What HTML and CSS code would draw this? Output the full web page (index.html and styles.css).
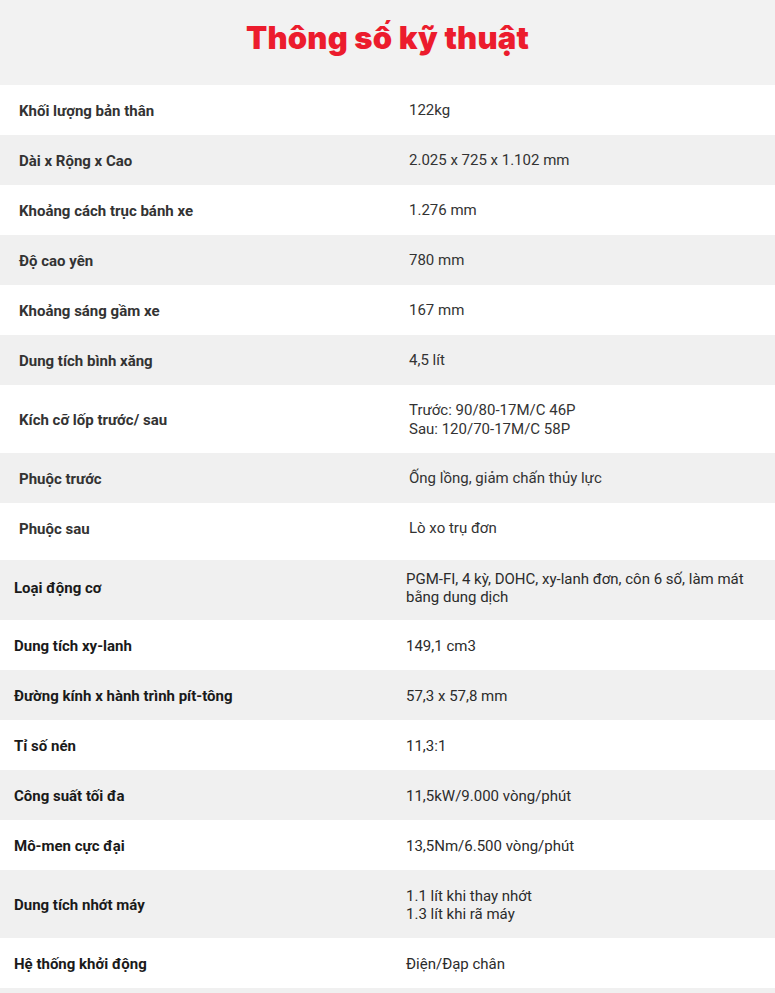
FILE: index.html
```html
<!DOCTYPE html>
<html lang="vi">
<head>
<meta charset="utf-8">
<title>Thông số kỹ thuật</title>
<link rel="stylesheet" href="styles.css">
</head>
<body>
<div class="page">
  <header class="head">
    <h1 class="title">Thông số kỹ thuật</h1>
  </header>

  <section class="specs specs-a">
    <div class="row"><div class="label">Khối lượng bản thân</div><div class="value">122kg</div></div>
    <div class="row alt"><div class="label">Dài x Rộng x Cao</div><div class="value">2.025 x 725 x 1.102 mm</div></div>
    <div class="row"><div class="label">Khoảng cách trục bánh xe</div><div class="value">1.276 mm</div></div>
    <div class="row alt"><div class="label">Độ cao yên</div><div class="value">780 mm</div></div>
    <div class="row"><div class="label">Khoảng sáng gầm xe</div><div class="value">167 mm</div></div>
    <div class="row alt"><div class="label">Dung tích bình xăng</div><div class="value">4,5 lít</div></div>
    <div class="row tall"><div class="label">Kích cỡ lốp trước/ sau</div><div class="value">Trước: 90/80-17M/C 46P<br>Sau: 120/70-17M/C 58P</div></div>
    <div class="row alt"><div class="label">Phuộc trước</div><div class="value">Ống lồng, giảm chấn thủy lực</div></div>
    <div class="row mid"><div class="label">Phuộc sau</div><div class="value">Lò xo trụ đơn</div></div>
  </section>

  <section class="specs specs-b">
    <div class="row alt wide"><div class="label">Loại động cơ</div><div class="value">PGM-FI, 4 kỳ, DOHC, xy-lanh đơn, côn 6 số, làm mát bằng dung dịch</div></div>
    <div class="row"><div class="label">Dung tích xy-lanh</div><div class="value">149,1 cm3</div></div>
    <div class="row alt"><div class="label">Đường kính x hành trình pít-tông</div><div class="value">57,3 x 57,8 mm</div></div>
    <div class="row"><div class="label">Tỉ số nén</div><div class="value">11,3:1</div></div>
    <div class="row alt"><div class="label">Công suất tối đa</div><div class="value">11,5kW/9.000 vòng/phút</div></div>
    <div class="row"><div class="label">Mô-men cực đại</div><div class="value">13,5Nm/6.500 vòng/phút</div></div>
    <div class="row alt tall"><div class="label">Dung tích nhớt máy</div><div class="value">1.1 lít khi thay nhớt<br>1.3 lít khi rã máy</div></div>
    <div class="row"><div class="label">Hệ thống khởi động</div><div class="value">Điện/Đạp chân</div></div>
  </section>
  <div class="foot"></div>
</div>
</body>
</html>
```

FILE: styles.css
```css
* { box-sizing: border-box; }
html, body { margin: 0; padding: 0; background: #ffffff; }
body { font-family: Roboto, "Noto Sans", "Liberation Sans", sans-serif; }

.page { width: 775px; }

.head {
  background: #f2f2f2;
  height: 85px;
  display: flex;
  align-items: center;
  justify-content: center;
}
.title {
  margin: 0;
  padding-bottom: 10px;
  font-family: Inter, "Noto Sans", sans-serif;
  font-weight: 900;
  font-size: 31px;
  letter-spacing: 0.2px;
  color: #ec1c2d;
}

.row {
  display: grid;
  align-items: center;
  height: 50px;
  padding-top: 1px;
  background: #ffffff;
  font-size: 15px;
  line-height: 18px;
}
.row.alt { background: #f0f0f0; }
.row.tall { height: 68px; }
.row.mid { height: 57px; padding-bottom: 7px; }
.row.wide { height: 60px; padding-bottom: 6px; }

.label { font-weight: 700; }
.value { font-weight: 400; padding-right: 14px; }

.specs-a .row { grid-template-columns: 409px 1fr; }
.specs-a .label { padding-left: 19px; color: #333333; }
.specs-a .value { color: #333333; line-height: 19px; }

.specs-b .row { grid-template-columns: 406px 1fr; }
.specs-b .label { padding-left: 14px; color: #1a1a1a; }
.specs-b .value { color: #2b2b2b; }

.foot { height: 6px; background: #f0f0f0; }
```
